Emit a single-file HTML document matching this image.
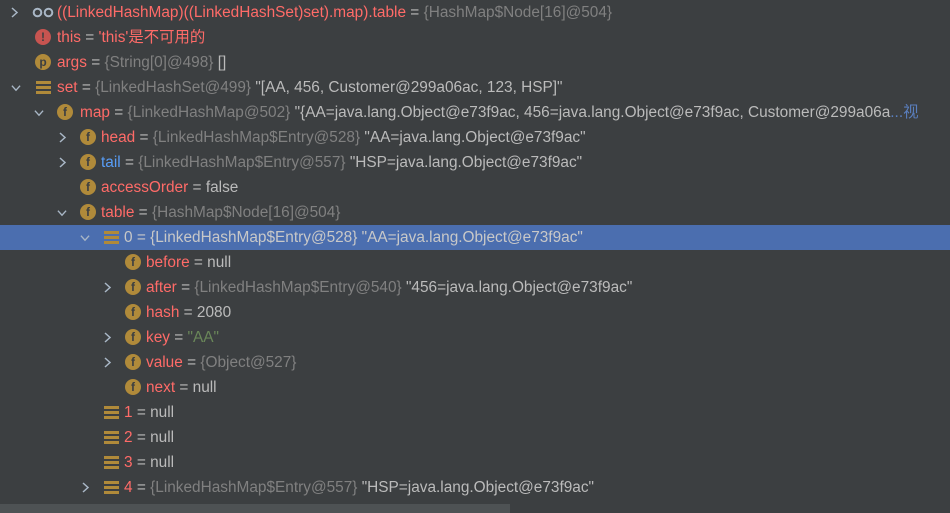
<!DOCTYPE html>
<html><head><meta charset="utf-8"><style>
html,body{margin:0;width:950px;height:513px;overflow:hidden}
body{background:#3c3f41;position:relative;font-family:"Liberation Sans","Noto Sans CJK SC",sans-serif;font-size:15.4px;color:#bbbbbb}
.r{position:absolute;left:0;width:950px;height:25px;line-height:25px;white-space:nowrap}
.sel{background:#4b6eaf}
.a{position:absolute;top:7px;width:10px;height:11px}
.ic{position:absolute;top:4px;width:16px;height:16px;border-radius:50%;background:#b08a3a;color:#3c3f41;font-size:12px;line-height:16px;text-align:center;font-weight:bold}
.arr{position:absolute;top:6px;width:15px;height:13px}
.arr i{display:block;height:3px;background:#b08a3a;margin-bottom:2px}
.t{position:absolute;top:0}
.n{color:#ff6b68}.g{color:#808080}.s{color:#6a8759}.b{color:#589df6}.w{color:#bbbbbb}
.bar{position:absolute;left:0;top:504px;width:510px;height:9px;background:#4e5254}
</style></head><body>
<div class="r" style="top:0"><svg class="a" style="left:9px" viewBox="0 0 10 11"><path d="M3 1l5 4.5L3 10" stroke="#a9b7c6" stroke-width="1.5" fill="none"/></svg><svg style="position:absolute;left:32px;top:7px" width="22" height="11" viewBox="0 0 22 11"><circle cx="5.5" cy="5.5" r="3.8" stroke="#a9b7c6" stroke-width="2" fill="none"/><circle cx="16.5" cy="5.5" r="3.8" stroke="#a9b7c6" stroke-width="2" fill="none"/></svg><span class="t n" style="left:57px">((LinkedHashMap)((LinkedHashSet)set).map).table <span class="w">=</span> <span class="g">{HashMap$Node[16]@504}</span></span></div>
<div class="r" style="top:25px"><span class="ic" style="left:35px;background:#c75450;color:#3c3f41">!</span><span class="t n" style="left:57px">this <span class="w">=</span> 'this'是不可用的</span></div>
<div class="r" style="top:50px"><span class="ic" style="left:35px">p</span><span class="t n" style="left:57px">args <span class="w">=</span> <span class="g">{String[0]@498}</span> <span class="w">[]</span></span></div>
<div class="r" style="top:75px"><svg class="a" style="left:11px" viewBox="0 0 11 10"><path d="M1 3l4.5 5L10 3" stroke="#a9b7c6" stroke-width="1.5" fill="none"/></svg><span class="arr" style="left:36px"><i></i><i></i><i></i></span><span class="t n" style="left:57px">set <span class="w">=</span> <span class="g">{LinkedHashSet@499}</span> <span class="w">"[AA, 456, Customer@299a06ac, 123, HSP]"</span></span></div>
<div class="r" style="top:100px"><svg class="a" style="left:34px" viewBox="0 0 11 10"><path d="M1 3l4.5 5L10 3" stroke="#a9b7c6" stroke-width="1.5" fill="none"/></svg><span class="ic" style="left:57px">f</span><span class="t n" style="left:80px">map <span class="w">=</span> <span class="g">{LinkedHashMap@502}</span> <span class="w">"{AA=java.lang.Object@e73f9ac, 456=java.lang.Object@e73f9ac, Customer@299a06a</span><span style="color:#5a7fbf">...视</span></span></div>
<div class="r" style="top:125px"><svg class="a" style="left:57px" viewBox="0 0 10 11"><path d="M3 1l5 4.5L3 10" stroke="#a9b7c6" stroke-width="1.5" fill="none"/></svg><span class="ic" style="left:80px">f</span><span class="t n" style="left:101px">head <span class="w">=</span> <span class="g">{LinkedHashMap$Entry@528}</span> <span class="w">"AA=java.lang.Object@e73f9ac"</span></span></div>
<div class="r" style="top:150px"><svg class="a" style="left:57px" viewBox="0 0 10 11"><path d="M3 1l5 4.5L3 10" stroke="#a9b7c6" stroke-width="1.5" fill="none"/></svg><span class="ic" style="left:80px">f</span><span class="t b" style="left:101px">tail <span class="w">=</span> <span class="g">{LinkedHashMap$Entry@557}</span> <span class="w">"HSP=java.lang.Object@e73f9ac"</span></span></div>
<div class="r" style="top:175px"><span class="ic" style="left:80px">f</span><span class="t n" style="left:101px">accessOrder <span class="w">=</span> <span class="w">false</span></span></div>
<div class="r" style="top:200px"><svg class="a" style="left:57px" viewBox="0 0 11 10"><path d="M1 3l4.5 5L10 3" stroke="#a9b7c6" stroke-width="1.5" fill="none"/></svg><span class="ic" style="left:80px">f</span><span class="t n" style="left:101px">table <span class="w">=</span> <span class="g">{HashMap$Node[16]@504}</span></span></div>
<div class="r sel" style="top:225px"><svg class="a" style="left:80px" viewBox="0 0 11 10"><path d="M1 3l4.5 5L10 3" stroke="#a9b7c6" stroke-width="1.5" fill="none"/></svg><span class="arr" style="left:104px"><i></i><i></i><i></i></span><span class="t" style="left:124px;color:#c8c8c8">0 = {LinkedHashMap$Entry@528} "AA=java.lang.Object@e73f9ac"</span></div>
<div class="r" style="top:250px"><span class="ic" style="left:125px">f</span><span class="t n" style="left:146px">before <span class="w">= null</span></span></div>
<div class="r" style="top:275px"><svg class="a" style="left:102px" viewBox="0 0 10 11"><path d="M3 1l5 4.5L3 10" stroke="#a9b7c6" stroke-width="1.5" fill="none"/></svg><span class="ic" style="left:125px">f</span><span class="t n" style="left:146px">after <span class="w">=</span> <span class="g">{LinkedHashMap$Entry@540}</span> <span class="w">"456=java.lang.Object@e73f9ac"</span></span></div>
<div class="r" style="top:300px"><span class="ic" style="left:125px">f</span><span class="t n" style="left:146px">hash <span class="w">= 2080</span></span></div>
<div class="r" style="top:325px"><svg class="a" style="left:102px" viewBox="0 0 10 11"><path d="M3 1l5 4.5L3 10" stroke="#a9b7c6" stroke-width="1.5" fill="none"/></svg><span class="ic" style="left:125px">f</span><span class="t n" style="left:146px">key <span class="w">=</span> <span class="s">"AA"</span></span></div>
<div class="r" style="top:350px"><svg class="a" style="left:102px" viewBox="0 0 10 11"><path d="M3 1l5 4.5L3 10" stroke="#a9b7c6" stroke-width="1.5" fill="none"/></svg><span class="ic" style="left:125px">f</span><span class="t n" style="left:146px">value <span class="w">=</span> <span class="g">{Object@527}</span></span></div>
<div class="r" style="top:375px"><span class="ic" style="left:125px">f</span><span class="t n" style="left:146px">next <span class="w">= null</span></span></div>
<div class="r" style="top:400px"><span class="arr" style="left:104px"><i></i><i></i><i></i></span><span class="t n" style="left:124px">1 <span class="w">= null</span></span></div>
<div class="r" style="top:425px"><span class="arr" style="left:104px"><i></i><i></i><i></i></span><span class="t n" style="left:124px">2 <span class="w">= null</span></span></div>
<div class="r" style="top:450px"><span class="arr" style="left:104px"><i></i><i></i><i></i></span><span class="t n" style="left:124px">3 <span class="w">= null</span></span></div>
<div class="r" style="top:475px"><svg class="a" style="left:80px" viewBox="0 0 10 11"><path d="M3 1l5 4.5L3 10" stroke="#a9b7c6" stroke-width="1.5" fill="none"/></svg><span class="arr" style="left:104px"><i></i><i></i><i></i></span><span class="t n" style="left:124px">4 <span class="w">=</span> <span class="g">{LinkedHashMap$Entry@557}</span> <span class="w">"HSP=java.lang.Object@e73f9ac"</span></span></div>
<div class="r" style="top:500px;height:13px;overflow:hidden"><span class="arr" style="left:104px"><i></i><i></i><i></i></span><span class="t n" style="left:124px">5 <span class="w">= null</span></span></div>
<div class="bar"></div>
</body></html>
